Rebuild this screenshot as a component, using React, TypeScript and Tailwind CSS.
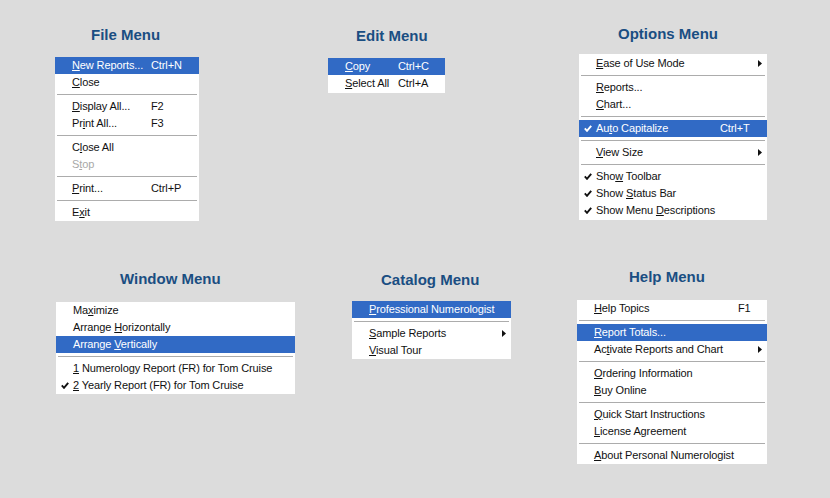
import React from "react";

// Menu item type definition
type Item =
  | "sep"
  | {
      label: string; // "&" marks the mnemonic letter
      shortcut?: string;
      checked?: boolean;
      submenu?: boolean;
      active?: boolean;
      disabled?: boolean;
    };

interface MenuProps {
  items: Item[];
  labelClass: string;
  className?: string;
}

interface GroupProps {
  title: string;
  className: string;
  titleClass: string;
  children: React.ReactNode;
}

const fileItems: Item[] = [
  { label: "&New Reports...", shortcut: "Ctrl+N", active: true },
  { label: "&Close" },
  "sep",
  { label: "&Display All...", shortcut: "F2" },
  { label: "Pr&int All...", shortcut: "F3" },
  "sep",
  { label: "C&lose All" },
  { label: "S&top", disabled: true },
  "sep",
  { label: "&Print...", shortcut: "Ctrl+P" },
  "sep",
  { label: "E&xit" },
];

const editItems: Item[] = [
  { label: "&Copy", shortcut: "Ctrl+C", active: true },
  { label: "&Select All", shortcut: "Ctrl+A" },
];

const optionsItems: Item[] = [
  { label: "&Ease of Use Mode", submenu: true },
  "sep",
  { label: "&Reports..." },
  { label: "&Chart..." },
  "sep",
  { label: "Au&to Capitalize", shortcut: "Ctrl+T", checked: true, active: true },
  "sep",
  { label: "&View Size", submenu: true },
  "sep",
  { label: "Sho&w Toolbar", checked: true },
  { label: "Show &Status Bar", checked: true },
  { label: "Show Menu &Descriptions", checked: true },
];

const windowItems: Item[] = [
  { label: "Ma&ximize" },
  { label: "Arrange &Horizontally" },
  { label: "Arrange &Vertically", active: true },
  "sep",
  { label: "&1 Numerology Report (FR) for Tom Cruise" },
  { label: "&2 Yearly Report (FR) for Tom Cruise", checked: true },
];

const catalogItems: Item[] = [
  { label: "&Professional Numerologist", active: true },
  "sep",
  { label: "&Sample Reports", submenu: true },
  { label: "&Visual Tour" },
];

const helpItems: Item[] = [
  { label: "&Help Topics", shortcut: "F1" },
  "sep",
  { label: "&Report Totals...", active: true },
  { label: "Ac&tivate Reports and Chart", submenu: true },
  "sep",
  { label: "&Ordering Information" },
  { label: "&Buy Online" },
  "sep",
  { label: "&Quick Start Instructions" },
  { label: "&License Agreement" },
  "sep",
  { label: "&About Personal Numerologist" },
];

export default function App() {
  return (
    <div className="w-[830px] h-[498px] overflow-hidden bg-[#dcdcdc] font-['Liberation_Sans',Arial,sans-serif]">
      {/* Top row */}
      <div className="flex h-[260px] items-start">
        <Group title="File Menu" className="ml-[55px] mt-[26px] w-[144px]" titleClass="pl-[36px]">
          <Menu items={fileItems} labelClass="w-[79px]" className="mt-[13px]" />
        </Group>
        <Group title="Edit Menu" className="ml-[129px] mt-[27px] w-[117px]" titleClass="pl-[28px]">
          <Menu items={editItems} labelClass="w-[53px]" className="mt-[13px] pb-px" />
        </Group>
        <Group title="Options Menu" className="ml-[134px] mt-[25px] w-[188px]" titleClass="pl-[39px]">
          <Menu items={optionsItems} labelClass="w-[124px]" className="mt-[11px] py-px" />
        </Group>
      </div>

      {/* Bottom row */}
      <div className="flex items-start">
        <Group title="Window Menu" className="ml-[56px] mt-[10px] w-[239px]" titleClass="pl-[64px]">
          <Menu items={windowItems} labelClass="w-[210px]" className="mt-[14px]" />
        </Group>
        <Group title="Catalog Menu" className="ml-[57px] mt-[11px] w-[159px]" titleClass="pl-[29px]">
          <Menu items={catalogItems} labelClass="w-[130px]" className="mt-[12px]" />
        </Group>
        <Group title="Help Menu" className="ml-[66px] mt-[8px] w-[190px]" titleClass="pl-[52px]">
          <Menu items={helpItems} labelClass="w-[144px]" className="mt-[14px]" />
        </Group>
      </div>
    </div>
  );
}

// Title + menu block
function Group({ title, className, titleClass, children }: GroupProps) {
  return (
    <div className={`flex shrink-0 flex-col ${className}`}>
      <h2 className={`h-[18px] whitespace-nowrap text-[15px] font-bold leading-[18px] text-[#1a4e82] ${titleClass}`}>
        {title}
      </h2>
      {children}
    </div>
  );
}

// Renders "&" mnemonic as underlined letter
function Label({ text }: { text: string }) {
  const i = text.indexOf("&");
  if (i < 0) return <>{text}</>;
  return (
    <>
      {text.slice(0, i)}
      <span className="underline underline-offset-[1px]">{text[i + 1]}</span>
      {text.slice(i + 2)}
    </>
  );
}

function Menu({ items, labelClass, className = "" }: MenuProps) {
  return (
    <div className={`bg-white text-[11px] tracking-[-0.12px] ${className}`}>
      {items.map((item, idx) =>
        item === "sep" ? (
          <div key={idx} className="flex h-[7px] flex-col justify-center px-[2px]">
            <div className="h-px bg-[#acacac]" />
          </div>
        ) : (
          <div
            key={idx}
            className={`flex h-[17px] items-center leading-[17px] ${
              item.active ? "bg-[#316ac5] text-white" : item.disabled ? "text-[#a8a8a8]" : "text-[#111]"
            }`}
          >
            <span className="flex w-[17px] shrink-0 items-center pl-[5px]">
              {item.checked && (
                <svg width="8" height="7" viewBox="0 0 8 7">
                  <path d="M0.8 3.4 L3 5.8 L7.2 0.8" fill="none" stroke="currentColor" strokeWidth="1.9" />
                </svg>
              )}
            </span>
            <span className={`shrink-0 whitespace-nowrap ${labelClass}`}>
              <Label text={item.label} />
            </span>
            {item.shortcut && <span className="whitespace-nowrap">{item.shortcut}</span>}
            {item.submenu && (
              <svg className="ml-auto mr-[5px]" width="4" height="7" viewBox="0 0 4 7">
                <polygon points="0,0 4,3.5 0,7" fill="currentColor" />
              </svg>
            )}
          </div>
        )
      )}
    </div>
  );
}
